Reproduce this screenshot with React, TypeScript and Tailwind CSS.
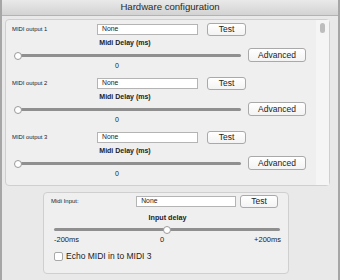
import React from "react";

const font = { fontFamily: '"Liberation Sans", Arial, sans-serif' };

function Btn({ label, w, h, cls = "" }: { label: string; w: string; h: string; cls?: string }) {
  return (
    <div
      className={`flex items-center justify-center rounded-[3px] border border-[#a9a9a9] bg-gradient-to-b from-white to-[#f3f3f3] text-[8.5px] text-[#222] ${w} ${h} ${cls}`}
    >
      {label}
    </div>
  );
}

function Field({ w, h }: { w: string; h: string }) {
  return (
    <div className={`flex items-center border border-[#b4b4b4] bg-white pl-[4px] text-[6.8px] text-[#222] ${w} ${h}`}>None</div>
  );
}

function Slider({ w, pos }: { w: string; pos: string }) {
  return (
    <div className={`relative flex h-[11px] items-center ${w}`}>
      <div className="h-[3px] w-full rounded-full bg-[#8f8f8f]" />
      <div className={`absolute top-[1.5px] h-[8px] w-[8px] rounded-full border border-[#9a9a9a] bg-white ${pos}`} />
    </div>
  );
}

function OutputRow({ n }: { n: number }) {
  return (
    <div className="h-[54px] pt-[3px]">
      <div className="flex h-[13px] items-center">
        <div className="w-[88px] pl-[3px] text-[5.9px] text-[#222]">MIDI output {n}</div>
        <Field w="w-[101px]" h="h-[11px]" />
        <Btn label="Test" w="ml-[9px] w-[39px]" h="h-[13px]" />
      </div>
      <div className="flex">
        <div className="w-[226px] pl-[6px]">
          <div className="mt-[1px] flex h-[13px] items-center justify-center text-[7px] font-bold text-[#222]">Midi Delay (ms)</div>
          <Slider w="w-[226px]" pos="left-[-1px]" />
          <div className="flex h-[10px] items-center pl-[100px] text-[7px] text-[#222]">0</div>
        </div>
        <div className="pt-[12px] pl-[13px]">
          <Btn label="Advanced" w="w-[58px]" h="h-[14px]" />
        </div>
      </div>
    </div>
  );
}

export default function App() {
  return (
    <div style={font} className="flex h-[280px] w-[340px] flex-col border-x-2 border-[#a6a6a6] bg-[#e9e9e9]">
      <div className="flex h-[16px] shrink-0 items-center justify-center border-b border-[#b3b3b3] bg-gradient-to-b from-[#e9e9e9] to-[#d3d3d3] text-[9.6px] text-[#2a2a2a]">
        Hardware configuration
      </div>
      <div className="ml-[3px] mr-[8px] mt-[3px] flex h-[167px] shrink-0 rounded-[4px] border border-[#cfcfcf] bg-[#efefef]">
        <div className="flex-1 pl-[3px]">
          <OutputRow n={1} />
          <OutputRow n={2} />
          <OutputRow n={3} />
        </div>
        <div className="w-[13px] bg-[#f5f5f5] pt-[3px] pl-[4px]">
          <div className="h-[10px] w-[5px] rounded-full bg-[#bdbdbd]" />
        </div>
      </div>
      <div className="ml-[41px] mt-[6px] h-[82px] w-[246px] shrink-0 rounded-[4px] border border-[#cfcfcf] bg-[#efefef] px-[10px] pt-[2px]">
        <div className="flex h-[13px] items-center">
          <div className="-ml-[3px] w-[86px] text-[6px] text-[#222]">Midi Input:</div>
          <Field w="w-[101px]" h="h-[11px]" />
          <Btn label="Test" w="ml-[4px] w-[38px]" h="h-[13px]" />
        </div>
        <div className="flex h-[16px] items-center justify-center pl-[3px] pt-[4px] text-[7.2px] font-bold text-[#222]">Input delay</div>
        <Slider w="w-[226px]" pos="left-[109px]" />
        <div className="flex h-[10px] w-[227px] items-center text-[7.5px] text-[#222]">
          <span className="w-[106px]">-200ms</span>
          <span>0</span>
          <span className="flex-1 text-right">+200ms</span>
        </div>
        <div className="mt-[5px] flex items-center">
          <div className="h-[9px] w-[9px] rounded-[2px] border border-[#a8a8a8] bg-white" />
          <span className="ml-[3px] text-[8.5px] text-[#222]">Echo MIDI in to MIDI 3</span>
        </div>
      </div>
    </div>
  );
}
